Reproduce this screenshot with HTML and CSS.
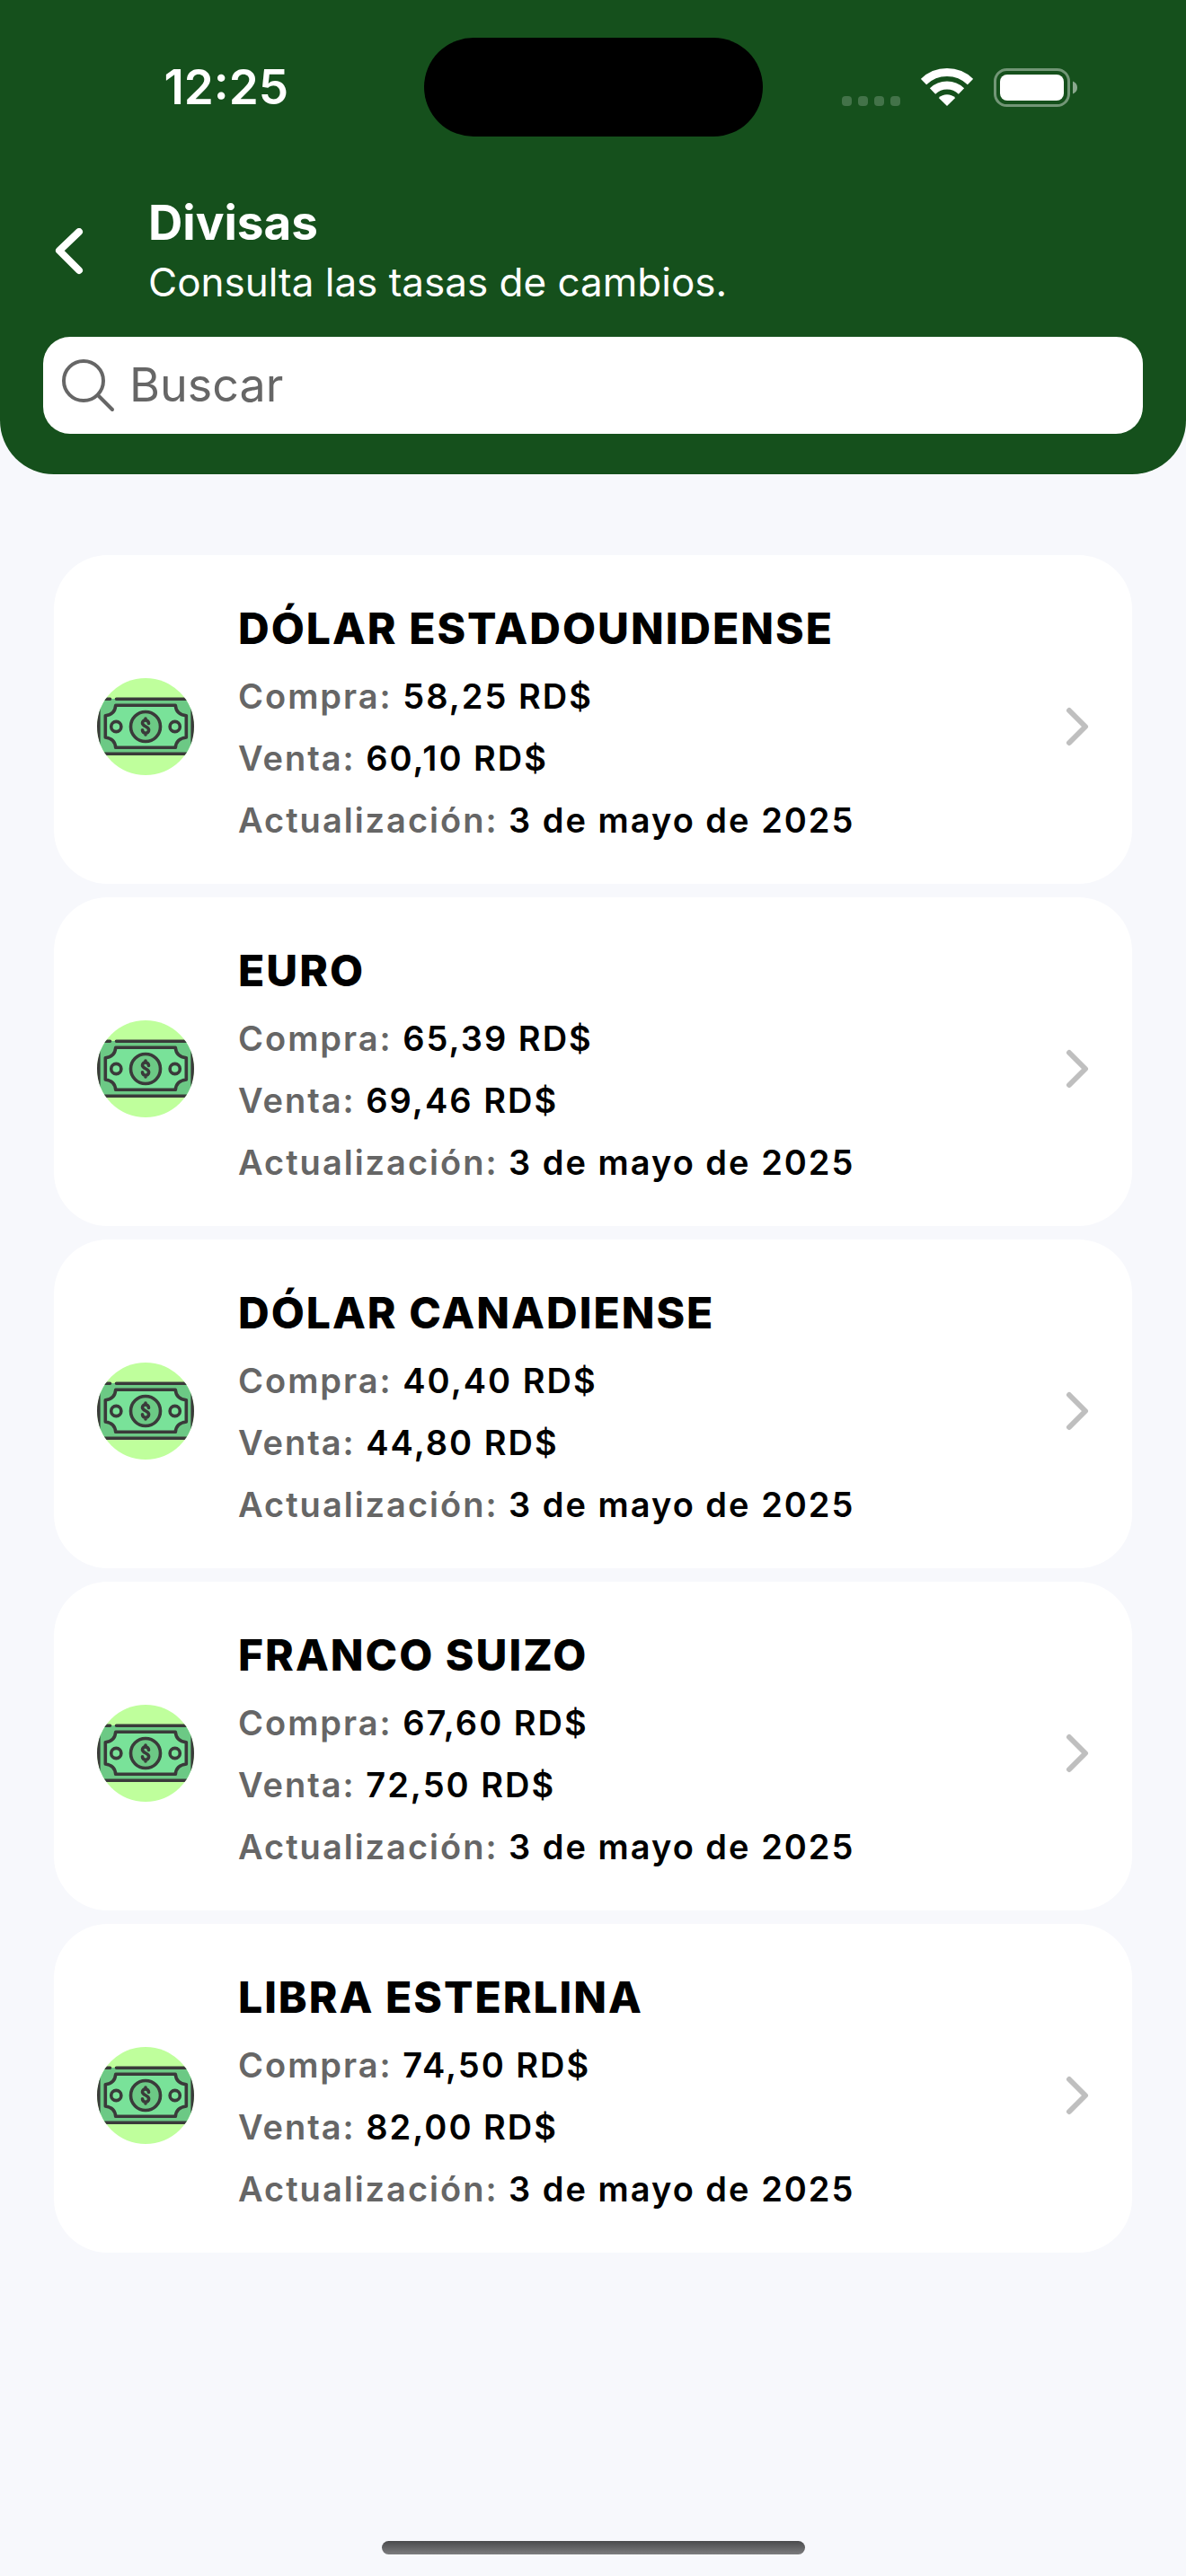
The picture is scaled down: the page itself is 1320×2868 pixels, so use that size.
FILE: index.html
```html
<!DOCTYPE html>
<html lang="es">
<head>
<meta charset="utf-8">
<meta name="viewport" content="width=device-width, initial-scale=1">
<title>Divisas</title>
<link rel="stylesheet" href="styles.css">
</head>
<body>
<svg class="sprite" aria-hidden="true">
  <defs>
    <clipPath id="disc"><circle cx="54" cy="54" r="54"/></clipPath>
    <symbol id="bill" viewBox="0 0 108 108">
      <g clip-path="url(#disc)">
        <rect width="108" height="108" fill="#bfff9c"/>
        <rect x="2" y="23" width="104" height="61" fill="#6cc985"/>
        <g fill="none" stroke="#3a3a3a" stroke-width="3.6" stroke-linecap="round" stroke-linejoin="round">
          <path d="M0 23.3H14.5M21.5 23.3H108M0 84.3H108M1.8 26V82M106.2 26V82"/>
          <path fill="#79e299" d="M20.7 30.3H87.3Q88 40.5 99.3 41.7V66Q88 67.500 87.300 77.300H20.700Q20 67.500 9.300 66V41.700Q20 40.500 20.700 30.300Z"/>
          <circle cx="54" cy="54" r="16.500" fill="#6cc985"/>
          <circle cx="21.300" cy="54" r="5.600"/>
          <circle cx="86.700" cy="54" r="5.600"/>
          <path d="M57.500 50.500C57.500 45.800 50.500 45.800 50.500 50C50.500 54 57.600 53.500 57.600 57.800C57.600 62.300 50.500 62.300 50.500 57.800M54 45V46.500M54 61.500V63"/>
        </g>
      </g>
    </symbol>
    <symbol id="chevron" viewBox="0 0 26 44">
      <path d="M4 4L22 22L4 40" fill="none" stroke="currentColor" stroke-width="6" stroke-linecap="round" stroke-linejoin="round"/>
    </symbol>
  </defs>
</svg>
<div class="screen">
  <header class="header">
    <div class="status">
      <time class="status-time">12:25</time>
      <div class="island"></div>
      <div class="status-icons">
        <svg width="65" height="42" viewBox="0 0 65 42" fill="#fff" fill-opacity=".2" aria-hidden="true">
          <rect x="0" y="31" width="11" height="11" rx="4"/><rect x="18" y="31" width="11" height="11" rx="4"/><rect x="36" y="31" width="11" height="11" rx="4"/><rect x="54" y="31" width="11" height="11" rx="4"/>
        </svg>
        <svg width="58" height="42" viewBox="0 0 58 42" aria-hidden="true">
          <g fill="none" stroke="#fff" stroke-width="9"><path d="M3 15A37.500 37.500 0 0 1 55 15"/><path d="M13 25.500A23 23 0 0 1 45 25.500"/></g>
          <path fill="#fff" d="M29 42L19.800 33A13.200 13.200 0 0 1 38.200 33Z"/>
        </svg>
        <svg width="93" height="43" viewBox="0 0 93 43" aria-hidden="true">
          <rect x="1.500" y="1.500" width="82" height="40" rx="13" fill="none" stroke="#fff" stroke-opacity=".4" stroke-width="3"/>
          <rect x="7" y="7" width="71" height="29" rx="8" fill="#fff"/>
          <path d="M88 14.500Q93 16.500 93 21.500T88 28.500Z" fill="#fff" fill-opacity=".5"/>
        </svg>
      </div>
    </div>
    <div class="heading">
      <button class="back" type="button" aria-label="Volver">
        <svg width="32" height="54" viewBox="0 0 32 54" aria-hidden="true"><path d="M27 4L5 25L27 47" fill="none" stroke="#fff" stroke-width="8" stroke-linecap="round" stroke-linejoin="round"/></svg>
      </button>
      <div>
        <h1 class="title">Divisas</h1>
        <p class="subtitle">Consulta las tasas de cambios.</p>
      </div>
    </div>
    <label class="search">
      <svg width="60" height="60" viewBox="0 0 60 60" fill="none" stroke="#666" stroke-linecap="round" aria-hidden="true"><circle cx="25" cy="25" r="22" stroke-width="4"/><path d="M41 41L57 57" stroke-width="4"/></svg>
      <input class="search-input" type="text" placeholder="Buscar" aria-label="Buscar">
    </label>
  </header>
  <main>
    <ul class="rates">
      <li><a class="card" href="#usd">
        <svg class="avatar" aria-hidden="true"><use href="#bill"/></svg>
        <div class="info">
          <h2 class="name">DÓLAR ESTADOUNIDENSE</h2>
          <p class="row">Compra: <b>58,25 RD$</b></p>
          <p class="row">Venta: <b>60,10 RD$</b></p>
          <p class="row">Actualización: <b>3 de mayo de 2025</b></p>
        </div>
        <svg class="go" aria-hidden="true"><use href="#chevron"/></svg>
      </a></li>
      <li><a class="card" href="#eur">
        <svg class="avatar" aria-hidden="true"><use href="#bill"/></svg>
        <div class="info">
          <h2 class="name">EURO</h2>
          <p class="row">Compra: <b>65,39 RD$</b></p>
          <p class="row">Venta: <b>69,46 RD$</b></p>
          <p class="row">Actualización: <b>3 de mayo de 2025</b></p>
        </div>
        <svg class="go" aria-hidden="true"><use href="#chevron"/></svg>
      </a></li>
      <li><a class="card" href="#cad">
        <svg class="avatar" aria-hidden="true"><use href="#bill"/></svg>
        <div class="info">
          <h2 class="name">DÓLAR CANADIENSE</h2>
          <p class="row">Compra: <b>40,40 RD$</b></p>
          <p class="row">Venta: <b>44,80 RD$</b></p>
          <p class="row">Actualización: <b>3 de mayo de 2025</b></p>
        </div>
        <svg class="go" aria-hidden="true"><use href="#chevron"/></svg>
      </a></li>
      <li><a class="card" href="#chf">
        <svg class="avatar" aria-hidden="true"><use href="#bill"/></svg>
        <div class="info">
          <h2 class="name">FRANCO SUIZO</h2>
          <p class="row">Compra: <b>67,60 RD$</b></p>
          <p class="row">Venta: <b>72,50 RD$</b></p>
          <p class="row">Actualización: <b>3 de mayo de 2025</b></p>
        </div>
        <svg class="go" aria-hidden="true"><use href="#chevron"/></svg>
      </a></li>
      <li><a class="card" href="#gbp">
        <svg class="avatar" aria-hidden="true"><use href="#bill"/></svg>
        <div class="info">
          <h2 class="name">LIBRA ESTERLINA</h2>
          <p class="row">Compra: <b>74,50 RD$</b></p>
          <p class="row">Venta: <b>82,00 RD$</b></p>
          <p class="row">Actualización: <b>3 de mayo de 2025</b></p>
        </div>
        <svg class="go" aria-hidden="true"><use href="#chevron"/></svg>
      </a></li>
    </ul>
  </main>
  <div class="home-bar"></div>
</div>
</body>
</html>
```
FILE: styles.css
```css
* {
  box-sizing: border-box;
  margin: 0;
  padding: 0;
}

body {
  background: #f7f8fc;
  color: #000;
  font-family: Inter, "Liberation Sans", sans-serif;
}

svg {
  display: block;
  flex: none;
}

.sprite {
  position: absolute;
  width: 0;
  height: 0;
}

.screen {
  display: flex;
  flex-direction: column;
  min-height: 100vh;
  padding-bottom: 24px;
}

.header {
  padding: 42px 48px 45px;
  border-radius: 0 0 60px 60px;
  background: #15501c;
  color: #fff;
}

/* Status bar */
.status {
  display: grid;
  grid-template-columns: 1fr auto 1fr;
  align-items: center;
  margin: 0 -16px;
}

.status-time {
  justify-self: center;
  font-size: 53px;
  font-weight: 600;
  line-height: 66px;
}

.island {
  width: 377px;
  height: 110px;
  border-radius: 55px;
  background: #000;
}

.status-icons {
  display: flex;
  justify-self: center;
  gap: 23px;
}

/* Heading */
.heading {
  display: flex;
  align-items: center;
  gap: 72px;
  margin-top: 63px;
  padding-left: 13px;
}

.back {
  border: 0;
  background: none;
  cursor: pointer;
}

.title {
  font-size: 53px;
  font-weight: 700;
  line-height: 66px;
}

.subtitle {
  font-size: 44px;
  line-height: 66px;
}

.search {
  display: flex;
  align-items: center;
  gap: 16px;
  height: 108px;
  margin-top: 28px;
  padding: 0 20px;
  border-radius: 30px;
  background: #fff;
}

.search-input {
  flex: 1;
  min-width: 0;
  border: 0;
  outline: 0;
  background: none;
  color: #000;
  font: 400 52px/66px Inter, "Liberation Sans", sans-serif;
}

.search-input::placeholder {
  color: #666;
  opacity: 1;
}

/* Rate cards */
.rates {
  display: flex;
  flex-direction: column;
  gap: 15px;
  padding: 90px 60px;
  list-style: none;
}

.card {
  display: flex;
  align-items: center;
  gap: 49px;
  padding: 52px 48px 36px;
  border-radius: 60px;
  background: #fff;
  color: inherit;
  text-decoration: none;
}

.avatar {
  width: 108px;
  height: 108px;
}

.info {
  flex: 1;
}

.name {
  margin-bottom: 11px;
  font-size: 48px;
  font-weight: 800;
  line-height: 60px;
  letter-spacing: 2px;
}

.row {
  color: #666;
  font-size: 38px;
  font-weight: 600;
  line-height: 69px;
  letter-spacing: 2px;
}

.row b {
  color: #000;
  font-weight: 600;
}

.go {
  width: 26px;
  height: 44px;
  color: #bfbfbf;
}

.home-bar {
  align-self: center;
  width: 471px;
  height: 15px;
  margin-top: auto;
  border-radius: 8px;
  background: linear-gradient(#4a4b4d, #7c7c7e);
}
```
